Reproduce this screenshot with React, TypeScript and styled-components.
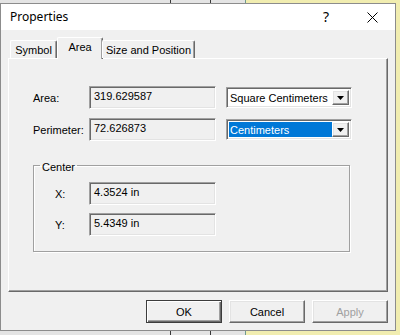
import { createGlobalStyle, styled, css } from "styled-components";

const GlobalStyle = createGlobalStyle`
  html, body {
    margin: 0;
    width: 400px;
    height: 335px;
    overflow: hidden;
  }
  body {
    font-family: "Liberation Sans", Arial, sans-serif;
    font-size: 11px;
    color: #000;
    background:
      linear-gradient(to right, transparent 170px, #3a3a3a 170px 171px, transparent 171px 210px, #3a3a3a 210px 211px, transparent 211px),
      linear-gradient(to right, #e4e4e4 0 245px, #6f9a8e 245px 246px, #f1edb0 246px);
  }
`;

const sunken = css`
  border: 1px solid;
  border-color: #a0a0a0 #ffffff #ffffff #a0a0a0;
  box-shadow: inset 1px 1px 0 #696969, inset -1px -1px 0 #e3e3e3;
`;

const raised = css`
  border: 1px solid;
  border-color: #ffffff #696969 #696969 #ffffff;
  box-shadow: inset -1px -1px 0 #a0a0a0, inset 1px 1px 0 #e3e3e3;
`;

const Dialog = styled.div`
  margin-top: 3px;
  width: 396px;
  height: 328px;
  box-sizing: border-box;
  border: 1px solid #8c8c8c;
  background: #f0f0f0;
  display: flex;
  flex-direction: column;
`;

const TitleBar = styled.div`
  height: 26px;
  flex: none;
  background: #fff;
  display: flex;
  align-items: center;
  padding-left: 9px;
  font-family: "Noto Sans", "Liberation Sans", sans-serif;
  font-size: 12px;
`;

const Title = styled.span`
  flex: 1;
  margin-top: -1px;
`;

const HelpButton = styled.span`
  width: 46px;
  text-align: center;
  font-size: 14px;
  margin-top: -2px;
`;

const CloseButton = styled.span`
  width: 46px;
  height: 26px;
  display: flex;
  align-items: center;
  justify-content: center;
`;

const Body = styled.div`
  padding: 7px 7px 0 7px;
  display: flex;
  flex-direction: column;
`;

const TabStrip = styled.div`
  display: flex;
  align-items: flex-end;
  height: 22px;
  padding-left: 2px;
  position: relative;
  z-index: 1;
  margin-bottom: -1px;
`;

const Tab = styled.div<{ $w: number; $active?: boolean }>`
  box-sizing: border-box;
  width: ${(p) => p.$w}px;
  height: 18px;
  margin-bottom: 1px;
  border-top: 1px solid #fff;
  border-left: 1px solid #fff;
  border-right: 1px solid #696969;
  box-shadow: inset -1px 0 0 #a0a0a0;
  border-radius: 2px 2px 0 0;
  display: flex;
  justify-content: center;
  align-items: center;
  padding-top: 1px;
  white-space: nowrap;
  ${(p) =>
    p.$active &&
    css`
      height: 22px;
      margin: 0 -1px 0 0;
      background: #f0f0f0;
      align-items: flex-start;
      padding-top: 3px;
    `}
`;

const Panel = styled.div`
  box-sizing: border-box;
  width: 380px;
  height: 234px;
  border: 1px solid;
  border-color: #fff #696969 #696969 #fff;
  box-shadow: inset -1px -1px 0 #a0a0a0;
  padding: 27px 0 0 24px;
`;

const FieldGrid = styled.div`
  display: grid;
  grid-template-columns: 56px 127px 136px;
  grid-auto-rows: 23px;
  row-gap: 9px;
`;

const Label = styled.span`
  align-self: center;
  white-space: nowrap;
`;

const ValueBox = styled.div`
  ${sunken};
  box-sizing: border-box;
  height: 23px;
  padding: 3px 0 0 4px;
  white-space: nowrap;
`;

const Select = styled.div`
  ${sunken};
  box-sizing: border-box;
  height: 21px;
  margin: 1px 0 0 10px;
  background: #fff;
  display: flex;
  padding: 2px;
`;

const SelectText = styled.span<{ $selected?: boolean }>`
  flex: 1;
  display: flex;
  align-items: center;
  padding-left: 1px;
  white-space: nowrap;
  ${(p) =>
    p.$selected &&
    css`
      background: #0078d7;
      color: #fff;
    `}
`;

const SelectArrow = styled.span`
  ${raised};
  box-sizing: border-box;
  width: 17px;
  background: #f0f0f0;
  display: flex;
  align-items: center;
  justify-content: center;
`;

const Group = styled.fieldset`
  box-sizing: border-box;
  width: 317px;
  height: 95px;
  margin: 16px 0 0 0;
  padding: 9px 0 0 0;
  border: 1px solid #a0a0a0;
  box-shadow: inset 1px 1px 0 #fff, 1px 1px 0 #fff;
`;

const Legend = styled.legend`
  padding: 4px 2px 0 2px;
  margin-left: 6px;
  line-height: 12px;
`;

const GroupGrid = styled.div`
  display: grid;
  grid-template-columns: 34px 127px;
  grid-auto-rows: 23px;
  row-gap: 8px;
  padding-left: 21px;
`;

const ButtonRow = styled.div`
  display: flex;
  justify-content: flex-end;
  gap: 7px;
  margin-top: 8px;
`;

const Button = styled.button<{ $default?: boolean; $disabled?: boolean }>`
  ${raised};
  box-sizing: border-box;
  width: 76px;
  height: 23px;
  background: #f0f0f0;
  font-family: "Liberation Sans", Arial, sans-serif;
  font-size: 11px;
  color: ${(p) => (p.$disabled ? "#a0a0a0" : "#000")};
  padding: 0;
  ${(p) =>
    p.$default &&
    css`
      border: 1px solid #3c3c3c;
      box-shadow: inset 1px 1px 0 #fff, inset -1px -1px 0 #696969, inset -2px -2px 0 #a0a0a0;
    `}
`;

const Arrow = () => (
  <svg width="7" height="4" viewBox="0 0 7 4">
    <path d="M0 0h7L3.5 4z" fill="#000" />
  </svg>
);

const CloseIcon = () => (
  <svg width="11" height="11" viewBox="0 0 11 11">
    <path d="M0.5 0.5l10 10M10.5 0.5l-10 10" stroke="#000" strokeWidth="1" fill="none" />
  </svg>
);

export default function App() {
  return (
    <>
      <GlobalStyle />
      <Dialog>
        <TitleBar>
          <Title>Properties</Title>
          <HelpButton>?</HelpButton>
          <CloseButton>
            <CloseIcon />
          </CloseButton>
        </TitleBar>
        <Body>
          <TabStrip>
            <Tab $w={47}>Symbol</Tab>
            <Tab $w={46} $active>
              Area
            </Tab>
            <Tab $w={93}>Size and Position</Tab>
          </TabStrip>
          <Panel>
            <FieldGrid>
              <Label>Area:</Label>
              <ValueBox>319.629587</ValueBox>
              <Select>
                <SelectText>Square Centimeters</SelectText>
                <SelectArrow>
                  <Arrow />
                </SelectArrow>
              </Select>
              <Label>Perimeter:</Label>
              <ValueBox>72.626873</ValueBox>
              <Select>
                <SelectText $selected>Centimeters</SelectText>
                <SelectArrow>
                  <Arrow />
                </SelectArrow>
              </Select>
            </FieldGrid>
            <Group>
              <Legend>Center</Legend>
              <GroupGrid>
                <Label>X:</Label>
                <ValueBox>4.3524 in</ValueBox>
                <Label>Y:</Label>
                <ValueBox>5.4349 in</ValueBox>
              </GroupGrid>
            </Group>
          </Panel>
          <ButtonRow>
            <Button $default>OK</Button>
            <Button>Cancel</Button>
            <Button $disabled>Apply</Button>
          </ButtonRow>
        </Body>
      </Dialog>
    </>
  );
}
